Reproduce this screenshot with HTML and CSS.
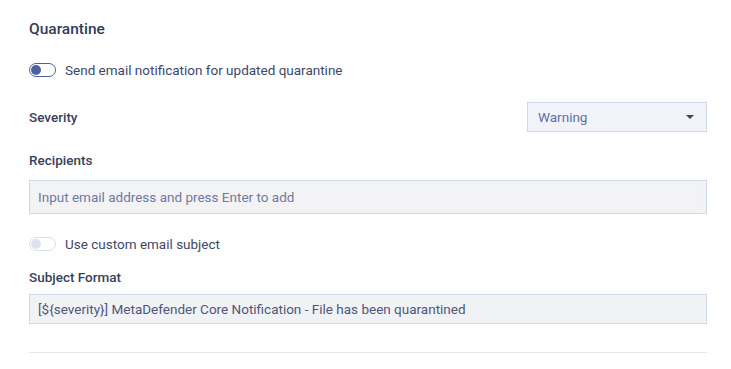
FILE: index.html
```html
<!DOCTYPE html>
<html lang="en">
<head>
    <meta charset="UTF-8">
    <title>Quarantine Notification</title>
    <meta name="viewport" content="width=device-width, initial-scale=1.0">
    <link rel="stylesheet" href="styles.css">
</head>
<body>
    <div class="panel">
        <h2 class="title">Quarantine</h2>

        <label class="switch-row row-notify">
            <span class="switch on"><span class="knob"></span></span>
            <span class="switch-text">Send email notification for updated quarantine</span>
        </label>

        <div class="field-row">
            <span class="label">Severity</span>
            <div class="select">
                <span class="select-value">Warning</span>
                <span class="caret"></span>
            </div>
        </div>

        <div class="label label-recipients">Recipients</div>
        <div class="input input-tall">
            <div class="input-inner">Input email address and press Enter to add</div>
        </div>

        <label class="switch-row row-custom">
            <span class="switch off"><span class="knob"></span></span>
            <span class="switch-text">Use custom email subject</span>
        </label>

        <div class="label label-subject">Subject Format</div>
        <div class="input input-short">
            <div class="input-inner">[${severity}] MetaDefender Core Notification - File has been quarantined</div>
        </div>

        <hr class="divider">
    </div>
</body>
</html>
```

FILE: styles.css
```css
body {
    margin: 0;
    background: #fff;
    font-family: 'Roboto', 'Liberation Sans', sans-serif;
    color: #3b4560;
}
.panel {
    width: 678px;
    padding: 20px 0 0 29px;
}
.title {
    margin: 0;
    font-size: 15.5px;
    line-height: 18px;
    font-weight: 500;
    color: #343c55;
}
.switch-row {
    display: flex;
    align-items: center;
    gap: 9px;
    height: 16px;
    font-size: 13.5px;
    color: #3e4866;
}
.row-notify {
    margin-top: 24px;
}
.row-custom {
    margin-top: 22px;
}
.switch {
    box-sizing: border-box;
    width: 27px;
    height: 14px;
    border-radius: 7px;
    border: 1.5px solid #4a63a0;
    padding: 0 0 0 1px;
    display: flex;
    align-items: center;
}
.switch .knob {
    width: 10px;
    height: 10px;
    border-radius: 50%;
    background: #4a63a0;
}
.switch.off {
    border-color: #dbe0eb;
}
.switch.off .knob {
    background: #dde2ed;
}
.field-row {
    display: flex;
    justify-content: space-between;
    align-items: center;
    margin-top: 24px;
}
.label {
    font-size: 13.5px;
    line-height: 16px;
    font-weight: 500;
    color: #39415a;
}
.label-recipients {
    margin-top: 20px;
}
.label-subject {
    margin-top: 17px;
}
.select {
    box-sizing: border-box;
    width: 180px;
    height: 30px;
    background: #f2f3f8;
    border: 1px solid #d1d7e6;
    display: flex;
    align-items: center;
    justify-content: space-between;
    padding: 0 12px 0 10px;
}
.select-value {
    font-size: 13.5px;
    color: #5c70a3;
}
.caret {
    width: 0;
    height: 0;
    border-left: 4px solid transparent;
    border-right: 4px solid transparent;
    border-top: 4px solid #3b4560;
}
.input {
    box-sizing: border-box;
    background: #f1f2f6;
    border: 1px solid #d1d7e6;
    font-size: 13.5px;
    color: #6c7ba2;
}
.input-tall {
    height: 34px;
    margin-top: 12px;
    padding: 4px 8px 4px 0;
}
.input-tall .input-inner {
    background: #f3f3f6;
    height: 24px;
    line-height: 24px;
    padding-left: 8px;
}
.input-short {
    height: 30px;
    margin-top: 9px;
    line-height: 28px;
    padding-left: 8px;
    color: #4e5876;
}
.divider {
    margin: 28px 0 0;
    border: none;
    border-top: 1px solid #e5e7ed;
}
```
